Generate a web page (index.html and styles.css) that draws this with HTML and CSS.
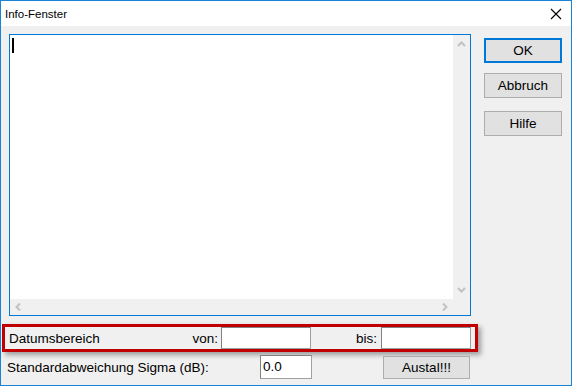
FILE: index.html
```html
<!DOCTYPE html>
<html lang="de">
<head>
    <meta charset="UTF-8">
    <title>Info-Fenster</title>
    <link rel="stylesheet" href="styles.css">
</head>
<body>
    <div class="window">
        <!-- Title bar -->
        <div class="titlebar">
            <span class="title">Info-Fenster</span>
            <svg class="close" width="12" height="12" viewBox="0 0 12 12">
                <path d="M1 1 L11 11 M11 1 L1 11" stroke="#000" stroke-width="1.1" fill="none"/>
            </svg>
        </div>

        <div class="content">
            <div class="main">
                <!-- Text area with scrollbars -->
                <div class="textbox">
                    <div class="text-area"><span class="caret"></span></div>
                    <div class="vscroll">
                        <svg width="17" height="17" viewBox="0 0 17 17"><path d="M5 11 L8.5 7.5 L12 11" stroke="#c2c2c2" stroke-width="2" fill="none"/></svg>
                        <svg width="17" height="17" viewBox="0 0 17 17"><path d="M5 6 L8.5 9.5 L12 6" stroke="#c2c2c2" stroke-width="2" fill="none"/></svg>
                    </div>
                    <div class="hscroll">
                        <svg width="16" height="16" viewBox="0 0 16 16"><path d="M10 4.5 L6.5 8 L10 11.5" stroke="#c2c2c2" stroke-width="2" fill="none"/></svg>
                        <svg width="16" height="16" viewBox="0 0 16 16"><path d="M6 4.5 L9.5 8 L6 11.5" stroke="#c2c2c2" stroke-width="2" fill="none"/></svg>
                    </div>
                    <div class="corner"></div>
                </div>

                <!-- Date range row (highlighted) -->
                <div class="range">
                    <span class="range-label">Datumsbereich</span>
                    <span class="von">von:</span>
                    <div class="field date"></div>
                    <span class="bis">bis:</span>
                    <div class="field date"></div>
                </div>

                <!-- Sigma row -->
                <div class="sigma">
                    <span class="sigma-label">Standardabweichung Sigma (dB):</span>
                    <div class="field sigma-field">0.0</div>
                    <button class="btn austal">Austal!!!</button>
                </div>
            </div>

            <div class="side">
                <button class="btn default">OK</button>
                <button class="btn">Abbruch</button>
                <button class="btn help">Hilfe</button>
            </div>
        </div>
    </div>
</body>
</html>
```

FILE: styles.css
```css
body {
    margin: 0;
    font-family: "Liberation Sans", Arial, sans-serif;
    font-size: 13.5px;
    color: #000;
    background: #fff;
}

.window {
    width: 572px;
    height: 386px;
    box-sizing: border-box;
    border: 1px solid #1883d7;
    background-color: #f0f0f0;
    display: flex;
    flex-direction: column;
}

.titlebar {
    height: 25px;
    background-color: #fff;
    display: flex;
    align-items: center;
    justify-content: space-between;
    padding: 0 9px 0 4px;
}

.title {
    font-size: 11.5px;
    color: #000;
}

.close {
    display: block;
}

.content {
    display: flex;
    padding: 8px 0 0 1px;
}

.main {
    width: 476px;
}

/* Text area */
.textbox {
    margin-left: 7px;
    width: 462px;
    height: 282px;
    box-sizing: border-box;
    border: 1px solid #0078d7;
    display: grid;
    grid-template-columns: 1fr 17px;
    grid-template-rows: 1fr 16px;
    background-color: #fff;
}

.text-area {
    background-color: #fff;
    padding: 3px 0 0 2px;
}

.caret {
    display: block;
    width: 2px;
    height: 15px;
    background-color: #000;
}

.vscroll {
    background-color: #f0f0f0;
    display: flex;
    flex-direction: column;
    justify-content: space-between;
}

.vscroll svg,
.hscroll svg {
    display: block;
}

.hscroll {
    background-color: #f0f0f0;
    display: flex;
    justify-content: space-between;
    align-items: center;
}

.corner {
    background-color: #f0f0f0;
}

/* Date range row */
.range {
    margin-top: 8px;
    height: 28px;
    box-sizing: border-box;
    border: 3px solid #c00000;
    box-shadow: 3px 3px 5px rgba(0, 0, 0, 0.35);
    display: flex;
    align-items: center;
    padding: 0 4px 0 4px;
}

.range-label {
    flex: 1;
}

.von {
    margin-right: 3px;
}

.field {
    box-sizing: border-box;
    background-color: #fff;
    border: 1px solid #a0a0a0;
    border-top-color: #828282;
    border-left-color: #828282;
}

.date {
    width: 90px;
    height: 22px;
}

.bis {
    width: 66px;
    text-align: right;
    padding-right: 4px;
}

/* Sigma row */
.sigma {
    margin-top: 3px;
    display: flex;
    align-items: center;
    padding-left: 5px;
}

.sigma-label {
    width: 253px;
}

.sigma-field {
    width: 52px;
    height: 24px;
    line-height: 22px;
    padding-left: 2px;
}

.btn {
    font-family: "Liberation Sans", Arial, sans-serif;
    font-size: 13.5px;
    color: #000;
    background-color: #e1e1e1;
    border: 1px solid #adadad;
    padding: 0;
    box-sizing: border-box;
}

.austal {
    margin-left: 71px;
    width: 87px;
    height: 23px;
}

/* Side buttons */
.side {
    margin-left: 6px;
    padding-top: 4px;
    display: flex;
    flex-direction: column;
}

.side .btn {
    width: 78px;
    height: 25px;
    margin-bottom: 10px;
}

.side .default {
    border: 2px solid #0078d7;
}

.side .help {
    margin-top: 3px;
}
```
